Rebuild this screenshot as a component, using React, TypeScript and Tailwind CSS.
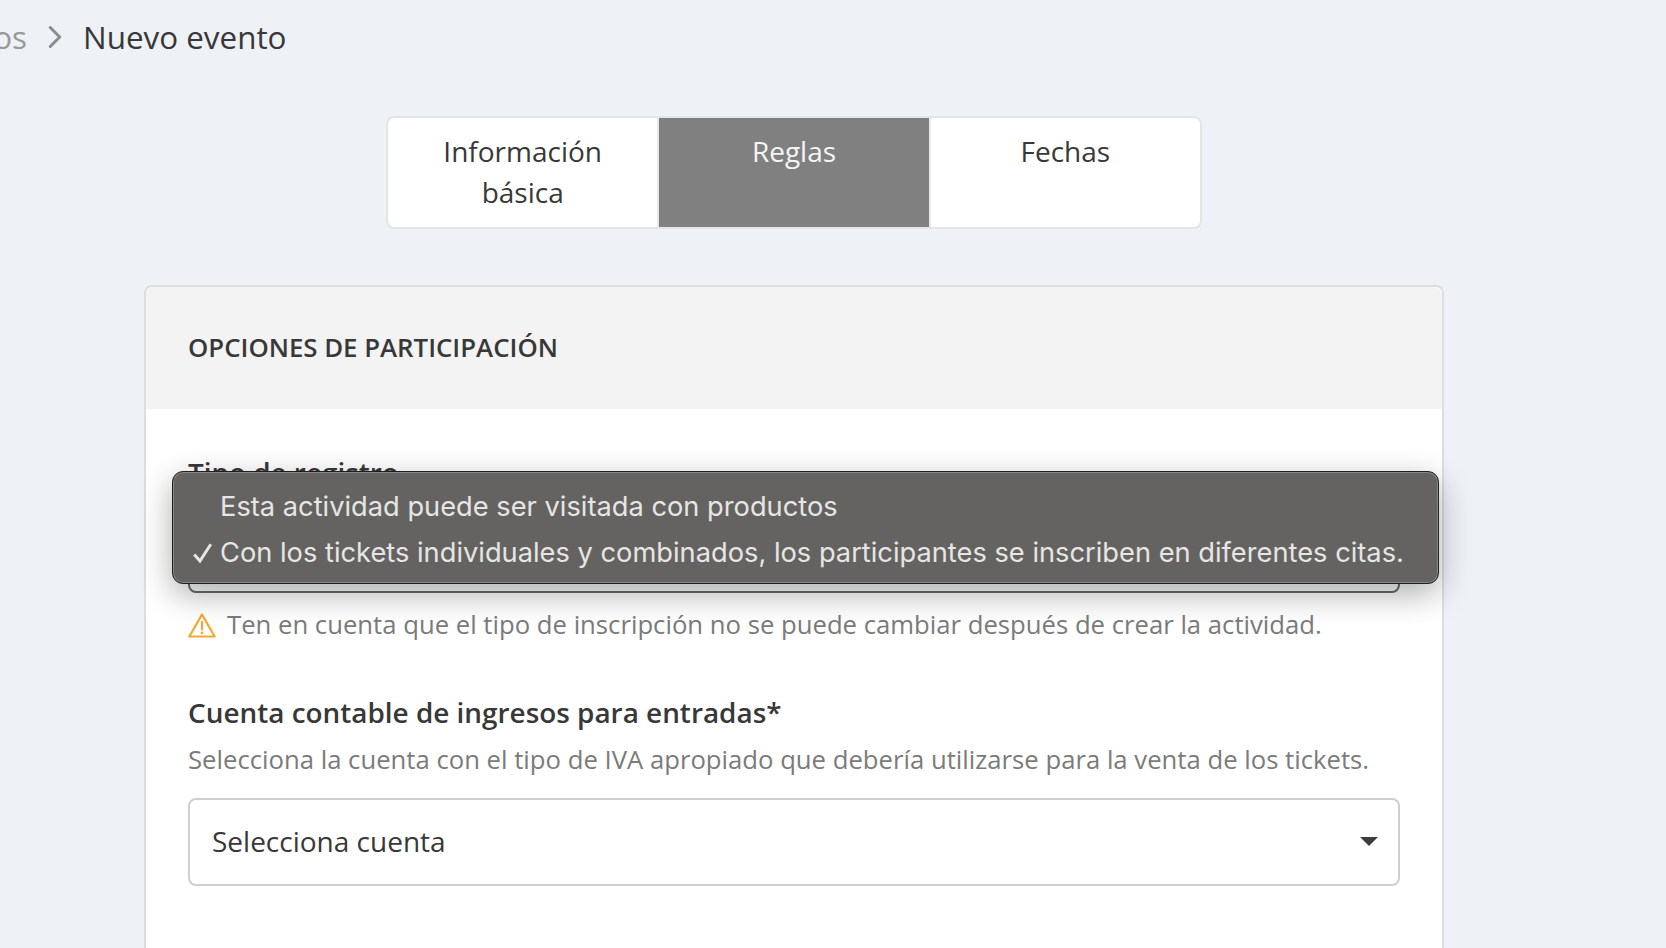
import { ChevronRight } from 'lucide-react';

const tabs = ['Información básica', 'Reglas', 'Fechas'];

function Caret() {
  return (
    <svg width="18" height="9" viewBox="0 0 18 9" className="shrink-0">
      <path d="M0 0h18L9 9z" fill="#3d3d3d" />
    </svg>
  );
}

function WarningIcon() {
  return (
    <svg width="28" height="25" viewBox="0 0 28 25" fill="none" className="shrink-0">
      <path
        d="M14 1.5 1.3 23.5h25.4L14 1.5z"
        stroke="#f5a733"
        strokeWidth="2.2"
        strokeLinejoin="round"
      />
      <path d="M14 9v7.5" stroke="#f5a733" strokeWidth="2.2" strokeLinecap="round" />
      <circle cx="14" cy="20" r="1.4" fill="#f5a733" />
    </svg>
  );
}

function Tick() {
  return (
    <svg width="19" height="20" viewBox="0 0 19 20" fill="none" className="mr-[8px] shrink-0">
      <path d="M1.2 11.5 7 18 17.8 1.2" stroke="#e6e6e5" strokeWidth="3" />
    </svg>
  );
}

export default function App() {
  return (
    <div className="h-[948px] overflow-hidden bg-[#eef2f7] font-['Open_Sans',sans-serif] text-[#383838]">
      <div className="flex h-[74px] items-center text-[31.4px]">
        <div className="flex w-[27px] justify-end overflow-hidden text-[#999999]">
          <span>Eventos</span>
        </div>
        <ChevronRight size={38} strokeWidth={1.9} className="ml-[9px] text-[#8c8c8c]" />
        <span className="ml-[9px]">Nuevo evento</span>
      </div>

      <div className="ml-[144px] mt-[42px] flex w-[1300px] flex-col">
        <div className="flex w-[816px] self-center overflow-hidden rounded-lg border-2 border-[#e3e4e6] bg-white text-center text-[28px] leading-[41px]">
          {tabs.map((tab, i) => (
            <div
              key={tab}
              className={
                i === 1
                  ? 'h-[109px] flex-1 bg-[#808080] px-10 pt-[13px] text-[#f5f5f5]'
                  : i === 0
                  ? 'h-[109px] flex-1 border-r-2 border-[#e8e8e8] px-10 pt-[13px]'
                  : 'h-[109px] flex-1 border-l-2 border-[#e8e8e8] px-10 pt-[13px]'
              }
            >
              {tab}
            </div>
          ))}
        </div>

        <div className="mt-[56px] h-[700px] rounded-lg border-2 border-[#dcdddf] bg-white">
          <div className="flex h-[122px] items-center rounded-t-lg bg-[#f3f3f3] px-[42px] pb-[2px] text-[25.8px] font-semibold">
            OPCIONES DE PARTICIPACIÓN
          </div>

          <div className="px-[42px] pt-[44px]">
            <div className="relative">
              <div className="text-[27.9px] font-semibold leading-[38px]">Tipo de registro</div>
              <div className="mt-[15px] h-[87px] rounded-lg border-2 border-[#6c6c6c]" />

              <div className="absolute left-[-16px] right-[-39px] top-[18px] rounded-[11px] border border-[#1f1f1f] bg-[#646361] px-[20px] pb-[7px] pt-[12px] font-['Inter',sans-serif] text-[27.25px] leading-[46px] text-[#e6e6e5] shadow-[inset_0_0_0_1px_#888886,0_10px_32px_rgba(0,0,0,0.32)]">
                <div className="pl-[27px]">Esta actividad puede ser visitada con productos</div>
                <div className="flex items-center whitespace-nowrap">
                  <Tick />
                  Con los tickets individuales y combinados, los participantes se inscriben en diferentes citas.
                </div>
              </div>
            </div>

            <div className="mt-[14px] flex h-[36px] items-center gap-[11px] text-[25.7px] text-[#7b7b7b]">
              <WarningIcon />
              <span>Ten en cuenta que el tipo de inscripción no se puede cambiar después de crear la actividad.</span>
            </div>

            <div className="mt-[50px] text-[27.9px] font-semibold leading-[38px]">
              Cuenta contable de ingresos para entradas*
            </div>
            <div className="mt-[11px] text-[25.7px] leading-[36px] text-[#7b7b7b]">
              Selecciona la cuenta con el tipo de IVA apropiado que debería utilizarse para la venta de los tickets.
            </div>
            <div className="mt-[20px] flex h-[88px] items-center justify-between rounded-lg border-2 border-[#cfcfcf] pb-[2px] pl-[22px] pr-[20px] text-[28px]">
              <span>Selecciona cuenta</span>
              <Caret />
            </div>
          </div>
        </div>
      </div>
    </div>
  );
}
